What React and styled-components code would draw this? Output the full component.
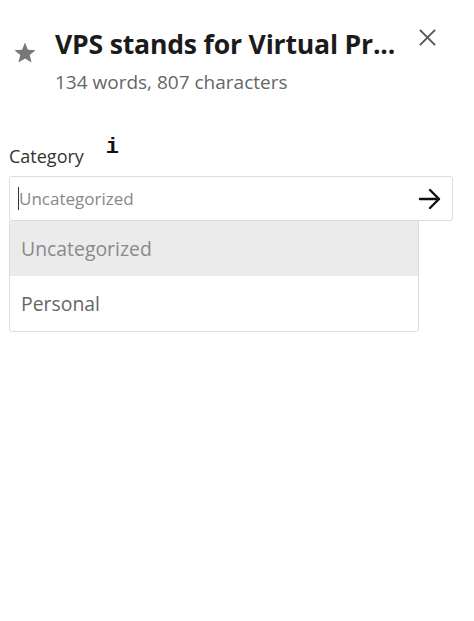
import React from "react";
import styled, { createGlobalStyle } from "styled-components";

const Global = createGlobalStyle`
  html, body {
    margin: 0;
    padding: 0;
    background: #fff;
    font-family: "Open Sans", "Noto Sans", sans-serif;
  }
`;

const Panel = styled.div`
  width: 474px;
  height: 621px;
  box-sizing: border-box;
  padding: 26px 9px 0 9px;
  background: #fff;
`;

const Header = styled.div`
  display: flex;
  align-items: flex-start;
`;

const StarWrap = styled.div`
  width: 32px;
  padding-top: 15px;
  padding-left: 4px;
  color: #777;
`;

const TitleBlock = styled.div`
  flex: 1;
  padding-left: 10px;
  min-width: 0;
`;

const Title = styled.h1`
  margin: 0;
  font-size: 26.6px;
  font-weight: 700;
  line-height: 36px;
  color: #1b1b1b;
  white-space: nowrap;
  letter-spacing: -0.2px;
`;

const Subtitle = styled.div`
  margin-top: 7px;
  font-size: 19px;
  line-height: 26px;
  color: #666;
`;

const CloseButton = styled.button`
  border: none;
  background: none;
  padding: 0;
  margin: 2px 28px 0 0;
  color: #555;
  cursor: pointer;
  display: flex;
`;

const LabelRow = styled.div`
  display: flex;
  align-items: flex-start;
  margin-top: 28px;
  height: 43px;
`;

const Label = styled.label`
  font-size: 18px;
  color: #333;
  padding-top: 21px;
`;

const InfoMark = styled.span`
  font-family: "Liberation Mono", "DejaVu Sans Mono", monospace;
  font-weight: 700;
  font-size: 22px;
  color: #111;
  margin-left: 22px;
  line-height: 1;
  padding-top: 14px;
`;

const Combo = styled.div`
  position: relative;
  width: 444px;
  margin-top: 10px;
`;

const InputBox = styled.div`
  display: flex;
  align-items: center;
  height: 45px;
  box-sizing: border-box;
  border: 1px solid #ddd;
  border-radius: 3px;
  padding: 0 10px 0 8px;
`;

const Input = styled.input`
  flex: 1;
  border: none;
  outline: none;
  font-family: inherit;
  font-size: 17px;
  color: #333;
  padding: 0;
  background: transparent;
  border-left: 1.5px solid #333;
  &::placeholder {
    color: #888;
  }
`;

const GoButton = styled.button`
  border: none;
  background: none;
  padding: 0;
  display: flex;
  color: #111;
  cursor: pointer;
`;

const Menu = styled.ul`
  list-style: none;
  margin: 0;
  padding: 0;
  width: 408px;
  border: 1px solid #ddd;
  border-top: none;
  border-radius: 0 0 4px 4px;
  overflow: hidden;
`;

const Option = styled.li`
  height: 55px;
  display: flex;
  align-items: center;
  padding-left: 11px;
  font-size: 19.4px;
  color: ${(p) => (p.$active ? "#8a8a8a" : "#666")};
  background: ${(p) => (p.$active ? "#ebebeb" : "#fff")};
`;

const Star = () => (
  <svg width="24" height="24" viewBox="0 0 24 24" fill="currentColor">
    <path d="M12 1.5l2.9 7.2 7.7.5-5.9 4.9 1.9 7.5L12 17.5l-6.6 4.1 1.9-7.5L1.4 9.2l7.7-.5z" />
  </svg>
);

const Close = () => (
  <svg width="19" height="19" viewBox="0 0 20 20" stroke="currentColor" strokeWidth="2" fill="none">
    <path d="M2 2l16 16M18 2L2 18" />
  </svg>
);

const Arrow = () => (
  <svg width="24" height="22" viewBox="0 0 24 22" stroke="currentColor" strokeWidth="2.4" fill="none" strokeLinecap="round" strokeLinejoin="round">
    <path d="M2 11h19M12 2l9 9-9 9" />
  </svg>
);

export default function App() {
  return (
    <>
      <Global />
      <Panel>
        <Header>
          <StarWrap>
            <Star />
          </StarWrap>
          <TitleBlock>
            <Title>VPS stands for Virtual Pr...</Title>
            <Subtitle>134 words, 807 characters</Subtitle>
          </TitleBlock>
          <CloseButton aria-label="Close">
            <Close />
          </CloseButton>
        </Header>
        <LabelRow>
          <Label>Category</Label>
          <InfoMark>i</InfoMark>
        </LabelRow>
        <Combo>
          <InputBox>
            <Input placeholder="Uncategorized" />
            <GoButton aria-label="Go">
              <Arrow />
            </GoButton>
          </InputBox>
          <Menu>
            <Option $active>Uncategorized</Option>
            <Option>Personal</Option>
          </Menu>
        </Combo>
      </Panel>
    </>
  );
}
